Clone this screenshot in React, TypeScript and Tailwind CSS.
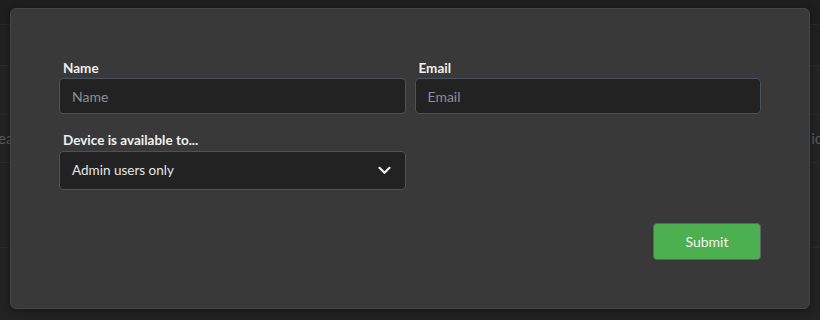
import React from "react";

export default function App() {
  return (
    <div
      className="relative w-[820px] h-[320px] overflow-hidden bg-[#232323]"
      style={{ fontFamily: '"Source Sans Pro", Lato, "Noto Sans", sans-serif' }}
    >
      {/* dimmed page behind the modal */}
      <div className="flex flex-col">
        <div className="h-[25px] bg-[#1e1e1e] border-b border-[#2a2a2a]" />
        <div className="h-[41px] bg-[#212121] border-b border-[#2c2c2c]" />
        <div className="h-[49px] bg-[#242424] border-b border-[#2a2a2a]" />
        <div className="h-[48px] bg-[#242424] border-b border-[#2c2c2c] flex items-center justify-between text-[15px] text-[#5a5a5a]">
          <span className="-ml-[2px]">ea</span>
          <span className="-mr-[2px]">ic</span>
        </div>
        <div className="h-[85px] bg-[#242424] border-b border-[#2a2a2a]" />
        <div className="flex-1 bg-[#222222]" />
      </div>

      {/* modal */}
      <div className="absolute left-[10px] top-[8px] w-[800px] h-[301px] rounded-[6px] bg-[#383938] border border-[#454746] shadow-[0_2px_8px_rgba(0,0,0,0.4)]">
        <div className="pl-[48px] pr-[48px] pt-[52px]">
          <div className="grid grid-cols-2 gap-x-[9px]">
            <div className="flex flex-col">
              <label className="text-[13.5px] font-bold text-[#f0f0f0] leading-[15px] pl-[4px] mb-[2px]">Name</label>
              <input
                placeholder="Name"
                className="h-[36px] rounded-[4px] bg-[#222222] border border-[#4a5260] px-[12px] text-[14px] text-[#e0e0e0] placeholder:text-[#8a9099] outline-none"
              />
            </div>
            <div className="flex flex-col">
              <label className="text-[13.5px] font-bold text-[#f0f0f0] leading-[15px] pl-[4px] mb-[2px]">Email</label>
              <input
                placeholder="Email"
                className="h-[36px] rounded-[4px] bg-[#222222] border border-[#4a5260] px-[12px] text-[14px] text-[#e0e0e0] placeholder:text-[#8a9099] outline-none"
              />
            </div>
          </div>

          <div className="grid grid-cols-2 gap-x-[9px] mt-[19px]">
            <div className="flex flex-col">
              <label className="text-[13.5px] font-bold text-[#f0f0f0] leading-[15px] pl-[4px] mb-[3px]">Device is available to...</label>
              <div className="h-[39px] rounded-[4px] bg-[#222222] border border-[#4a5260] pl-[12px] pr-[14px] flex items-center justify-between">
                <span className="text-[13.5px] text-[#e6e6e6]">Admin users only</span>
                <svg width="13" height="9" viewBox="0 0 13 9" fill="none">
                  <path d="M1.5 1.8 L6.5 6.8 L11.5 1.8" stroke="#f0f0f0" strokeWidth="2.2" strokeLinecap="round" strokeLinejoin="round" />
                </svg>
              </div>
            </div>
            <div />
          </div>

          <div className="flex justify-end mt-[33px]">
            <button className="w-[108px] h-[37px] rounded-[4px] bg-[#4caf50] border border-[#5a6370] text-[14px] text-[#f4f4f4]">
              Submit
            </button>
          </div>
        </div>
      </div>
    </div>
  );
}
